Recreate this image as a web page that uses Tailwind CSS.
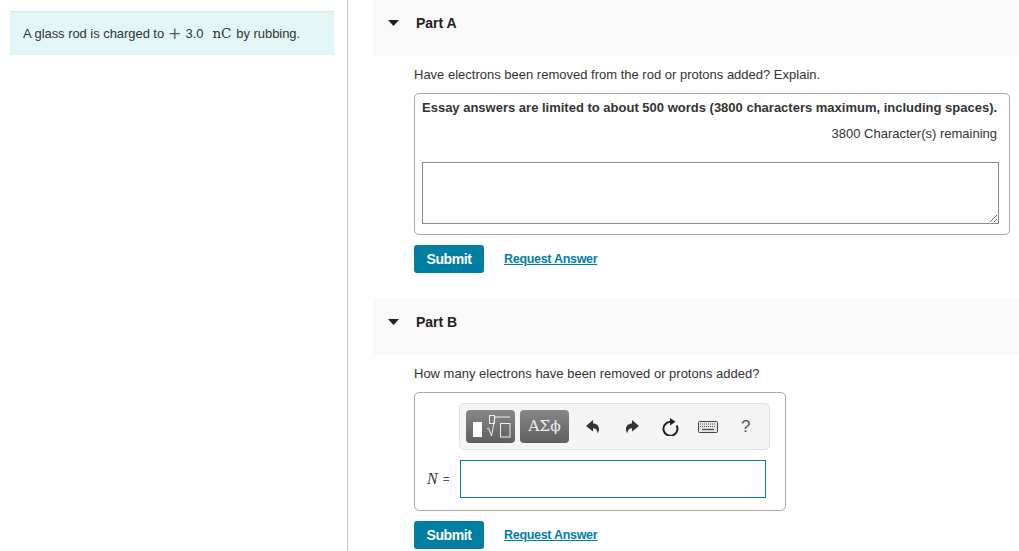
<!DOCTYPE html>
<html lang="en">
<head>
    <meta charset="UTF-8">
    <title>Part A and Part B</title>
    <script src="https://cdn.jsdelivr.net/npm/@tailwindcss/browser@4"></script>
</head>
<body class="bg-white font-['Liberation_Sans',Arial,sans-serif] text-[#333] overflow-hidden">
    <div class="flex h-[551px] overflow-hidden">
        <!-- left column -->
        <aside class="w-[348px] shrink-0 border-r border-[#c8c8c8] pt-[11px] pl-[10px] pr-[13px]">
            <div class="h-[44px] border-t border-[#d9e2e4] bg-[#e2f6f6] pl-[13px] flex items-center text-[13px] tracking-[-0.05px] text-[#333]">
                <span>A glass rod is charged to</span>
                <span class="ml-[4px] font-['DejaVu_Serif',serif] text-[#555] text-[16px] leading-none">+</span>
                <span class="ml-[4px] text-[13px]">3.0</span>
                <span class="ml-[9px] font-['DejaVu_Serif',serif] text-[13.5px]">nC</span>
                <span class="ml-[5px]">by rubbing.</span>
            </div>
        </aside>

        <!-- right column -->
        <main class="flex-1 pl-[26px]">
            <section>
                <div class="h-[56px] bg-[#f9f9f9] flex items-start pt-[15px] pl-[14px]">
                    <svg class="mt-[5px]" width="11" height="6" viewBox="0 0 11 6"><path d="M0 0H11L5.5 6Z" fill="#222"/></svg>
                    <h2 class="ml-[17px] text-[14px] leading-[16px] font-bold text-[#222]">Part A</h2>
                </div>
                <div class="pl-[40px]">
                    <p class="mt-[11px] text-[13px] leading-[15px]">Have electrons been removed from the rod or protons added? Explain.</p>
                    <div class="mt-[11px] w-[596px] h-[142px] border border-[#aaa] rounded-[5px] pl-[7px] pr-[10px] pt-[6px]">
                        <p class="text-[13px] leading-[15px] font-bold whitespace-nowrap text-[#333]">Essay answers are limited to about 500 words (3800 characters maximum, including spaces).</p>
                        <p class="mt-[11px] text-right pr-[2px] text-[13px] leading-[15px]">3800 Character(s) remaining</p>
                        <textarea class="block mt-[21px] w-[577px] h-[62px] border border-[#8c8c8c] bg-white outline-none"></textarea>
                    </div>
                    <div class="mt-[10px] flex items-center">
                        <button class="w-[70px] h-[28px] rounded-[3px] bg-[#007fa3] text-white text-[14px] font-bold tracking-[-0.4px]">Submit</button>
                        <a href="#" class="ml-[20px] text-[12.5px] font-bold tracking-[-0.3px] text-[#007fa3] underline">Request Answer</a>
                    </div>
                </div>
            </section>

            <section class="mt-[26px]">
                <div class="h-[56px] bg-[#f9f9f9] flex items-start pt-[15px] pl-[14px]">
                    <svg class="mt-[5px]" width="11" height="6" viewBox="0 0 11 6"><path d="M0 0H11L5.5 6Z" fill="#222"/></svg>
                    <h2 class="ml-[17px] text-[14px] leading-[16px] font-bold text-[#222]">Part B</h2>
                </div>
                <div class="pl-[40px]">
                    <p class="mt-[11px] text-[13px] leading-[15px]">How many electrons have been removed or protons added?</p>
                    <div class="mt-[11px] w-[372px] h-[119px] border border-[#aaa] rounded-[5px] pt-[10px] relative">
                        <!-- math toolbar -->
                        <div class="ml-[44px] w-[311px] h-[47px] border border-[#e0e0e0] rounded-[5px] bg-[#f4f4f4] flex items-center pl-[6px]">
                            <div class="w-[49px] h-[33px] rounded-[4px] bg-gradient-to-b from-[#888] to-[#5f5f5f]">
                                <svg width="49" height="33" viewBox="0 0 49 33" fill="none">
                                    <rect x="7" y="12" width="9" height="15" fill="#fff"/>
                                    <rect x="23.5" y="5.5" width="5" height="8" stroke="#eee" stroke-width="1"/>
                                    <path d="M21 19l1.5-1 3 8 3.5-19h15" stroke="#eee" stroke-width="1"/>
                                    <rect x="34.5" y="13.5" width="9.5" height="13.5" stroke="#eee" stroke-width="1"/>
                                </svg>
                            </div>
                            <div class="ml-[5px] w-[49px] h-[33px] rounded-[4px] bg-gradient-to-b from-[#888] to-[#5f5f5f] text-[#eee] font-['DejaVu_Serif',serif] text-[15.5px] flex items-center justify-center">ΑΣϕ</div>
                            <svg class="ml-[17px]" width="14" height="14" viewBox="0 0 14 14"><path d="M7 0L0 6l7 5.5V8.2c2.8 0 4.3 1.6 4.8 5.3C14.6 8 12.2 3.4 7 3.4Z" fill="#333"/></svg>
                            <svg class="ml-[25px]" width="14" height="14" viewBox="0 0 14 14"><path d="M7 0l7 6-7 5.5V8.2c-2.8 0-4.3 1.6-4.8 5.3C-.6 8 1.8 3.4 7 3.4Z" fill="#333"/></svg>
                            <svg class="ml-[23px]" width="17" height="18" viewBox="0 0 17 18" fill="none"><path d="M14.6 7.5A7 7 0 1 1 8 3.8" stroke="#222" stroke-width="2"/><path d="M8 0L13.5 3.8 8 7.6Z" fill="#222"/></svg>
                            <svg class="ml-[19px]" width="20" height="12" viewBox="0 0 20 12" fill="none"><rect x="0.5" y="0.5" width="19" height="11" rx="1" fill="#e6e6e6" stroke="#444"/><path d="M2 3h16M2 5.5h16" stroke="#555" stroke-width="1.2" stroke-dasharray="1 1"/><path d="M4 8.5h12" stroke="#555" stroke-width="1.4"/></svg>
                            <span class="ml-[23px] text-[17px] leading-none text-[#555]">?</span>
                        </div>
                        <!-- answer row -->
                        <div class="mt-[10px] flex items-center pl-[12px]">
                            <span class="font-['Liberation_Serif',serif] italic text-[16px] text-[#333]">N</span>
                            <span class="ml-[5px] text-[12px] text-[#555]">=</span>
                            <input class="ml-[10px] w-[306px] h-[38px] border border-[#007fa3] bg-white outline-none" type="text">
                        </div>
                    </div>
                    <div class="mt-[10px] flex items-center">
                        <button class="w-[70px] h-[28px] rounded-[3px] bg-[#007fa3] text-white text-[14px] font-bold tracking-[-0.4px]">Submit</button>
                        <a href="#" class="ml-[20px] text-[12.5px] font-bold tracking-[-0.3px] text-[#007fa3] underline">Request Answer</a>
                    </div>
                </div>
            </section>
        </main>
    </div>
</body>
</html>
